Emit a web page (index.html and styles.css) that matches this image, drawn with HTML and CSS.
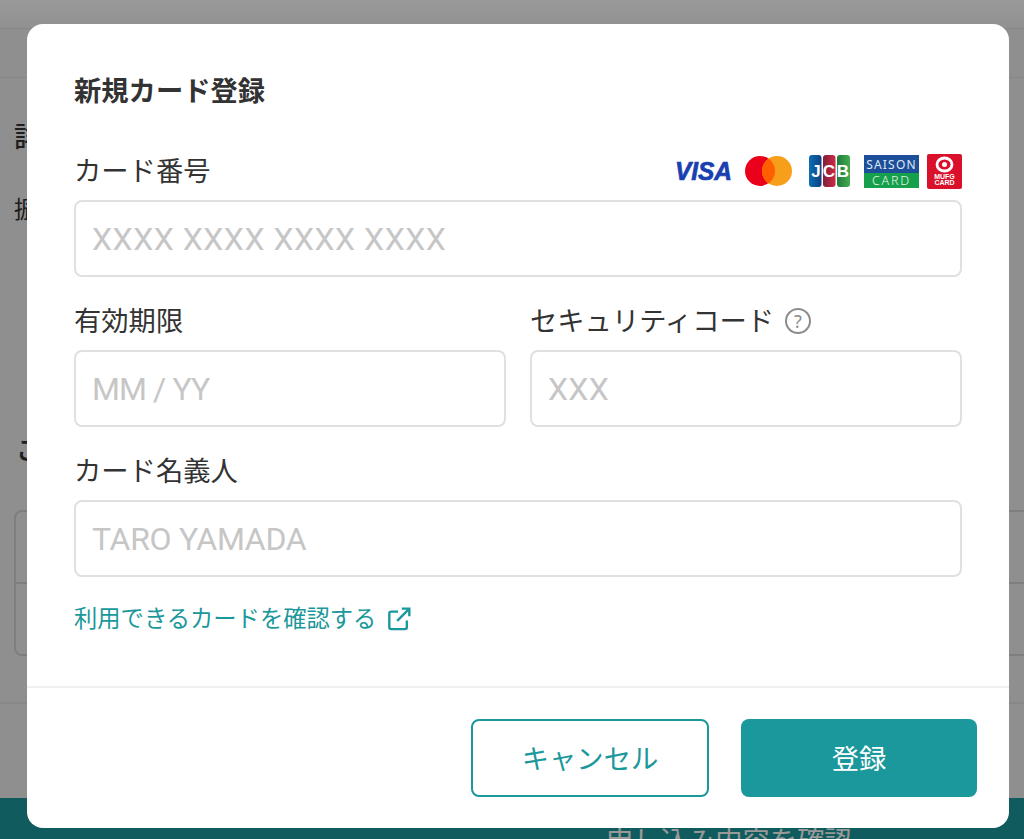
FILE: index.html
```html
<!DOCTYPE html>
<html lang="ja">
<head>
<meta charset="utf-8">
<title>新規カード登録</title>
<link rel="stylesheet" href="styles.css">
</head>
<body>
<div class="page">
  <div class="page-top"></div>
  <div class="page-nav"></div>
  <div class="page-body">
    <h2 class="bg-heading">詳細</h2>
    <p class="bg-text">振込</p>
    <h2 class="bg-heading second">ご利用</h2>
    <div class="bg-table"><div class="bg-row"></div><div class="bg-row"></div></div>
  </div>
  <div class="page-gap"></div>
  <div class="page-cta"><span>申し込み内容を確認</span></div>
</div>
<div class="backdrop"></div>
<form class="modal">
  <div class="modal-main">
    <h1 class="modal-title">新規カード登録</h1>
    <div class="field">
      <div class="label-row">
        <label class="label" for="num">カード番号</label>
        <div class="brands">
          <svg class="brand" width="60" height="26" viewBox="0 0 60 26"><text class="visa" x="1" y="22" textLength="57" lengthAdjust="spacingAndGlyphs">VISA</text></svg>
          <svg class="brand" width="47" height="30" viewBox="0 0 47 30"><circle cx="15" cy="15" r="15" fill="#eb001b"/><circle cx="32" cy="15" r="15" fill="#f79e1b"/><path d="M23.500 2.600a15 15 0 0 1 0 24.800a15 15 0 0 1 0-24.800z" fill="#ff5f00"/></svg>
          <svg class="brand" width="41" height="32" viewBox="0 0 41 32">
            <defs>
              <linearGradient id="jb"><stop offset="0" stop-color="#0d6fb0"/><stop offset="1" stop-color="#0e3f85"/></linearGradient>
              <linearGradient id="jr"><stop offset="0" stop-color="#7d1f3a"/><stop offset="1" stop-color="#cf2a45"/></linearGradient>
              <linearGradient id="jg"><stop offset="0" stop-color="#1d7a3c"/><stop offset="1" stop-color="#45ad4e"/></linearGradient>
            </defs>
            <rect width="12.500" height="32" rx="3" fill="url(#jb)"/>
            <rect x="14" width="12.500" height="32" rx="3" fill="url(#jr)"/>
            <rect x="28" width="13" height="32" rx="3" fill="url(#jg)"/>
            <text class="jcb" x="7 20 34" y="22">JCB</text>
          </svg>
          <svg class="brand" width="55" height="33" viewBox="0 0 55 33"><rect width="55" height="18" fill="#1d4e9a"/><rect y="18" width="55" height="15" fill="#17a04c"/><text class="saison" x="27.500" y="13.500">SAISON</text><text class="saison-card" x="27.500" y="30">CARD</text></svg>
          <svg class="brand" width="35" height="35" viewBox="0 0 35 35"><rect width="35" height="35" rx="2" fill="#d9112a"/><ellipse cx="17.500" cy="10.500" rx="7.500" ry="6.500" fill="none" stroke="#fff" stroke-width="2.800"/><circle cx="17.500" cy="10.500" r="2.500" fill="#fff"/><text class="mufg" x="17.500" y="24.500">MUFG</text><text class="mufg" x="17.500" y="31">CARD</text></svg>
        </div>
      </div>
      <input class="input input-num" id="num" placeholder="XXXX XXXX XXXX XXXX">
    </div>
    <div class="field-grid">
      <div class="field">
        <div class="label-row"><label class="label" for="exp">有効期限</label></div>
        <input class="input input-exp" id="exp" placeholder="MM / YY">
      </div>
      <div class="field">
        <div class="label-row start">
          <label class="label" for="cvc">セキュリティコード</label>
          <svg class="help" width="28" height="28" viewBox="0 0 28 28"><circle cx="14" cy="14" r="12" fill="none" stroke="#8c8c8c" stroke-width="2"/><text class="help-mark" x="14" y="20.500">?</text></svg>
        </div>
        <input class="input input-cvc" id="cvc" placeholder="XXX">
      </div>
    </div>
    <div class="field">
      <div class="label-row"><label class="label" for="name">カード名義人</label></div>
      <input class="input input-name" id="name" placeholder="TARO YAMADA">
    </div>
    <a class="card-link" href="#"><span class="card-link-text">利用できるカードを確認する</span>
      <svg width="24" height="24" viewBox="0 0 26 26" fill="none" stroke="#1b989b" stroke-width="2.600"><path d="M12 5H4.500A2 2 0 0 0 2.500 7v15a2 2 0 0 0 2 2h15a2 2 0 0 0 2-2v-7.500"/><path d="M11 15L24 2"/><path d="M16 1.800h8.200V10"/></svg>
    </a>
  </div>
  <div class="modal-footer">
    <button class="btn btn-outline" type="button">キャンセル</button>
    <button class="btn btn-solid" type="button">登録</button>
  </div>
</form>
</body>
</html>
```
FILE: styles.css
```css
* { box-sizing: border-box; }
html, body { margin: 0; height: 839px; overflow: hidden; }
body {
  font-family: "Noto Sans CJK JP", "Noto Sans", sans-serif;
  color: #333;
  background: #eee;
}
.page { height: 839px; display: flex; flex-direction: column; overflow: hidden; }
.page > div { flex: none; }
.page-top { height: 29px; background: linear-gradient(#fff, #f2f2f2); border-bottom: 1px solid #e2e2e2; }
.page-nav { height: 49px; border-bottom: 1px solid #e2e2e2; }
.page-body { height: 626px; padding: 37px 14px 0; border-bottom: 2px solid #e2e2e2; overflow: hidden; }
.bg-heading { margin: 0; font-size: 27.300px; font-weight: 500; line-height: 40px; }
.bg-heading.second { margin-top: 204px; padding-left: 2px; }
.bg-text { margin: 37px 0 0; font-size: 23.300px; line-height: 32px; }
.bg-table { margin-top: 42px; width: 1100px; height: 146px; border: 2px solid #d2d2d2; border-radius: 8px; }
.bg-row { height: 70px; }
.bg-row + .bg-row { height: 72px; border-top: 2px solid #d2d2d2; }
.page-gap { height: 94px; }
.page-cta {
  height: 64px;
  background: #1b989b;
  color: #fff;
  font-size: 27.300px;
  line-height: 46px;
  padding-top: 18px;
  padding-left: 606px;
  white-space: nowrap;
}
.backdrop { position: fixed; inset: 0; background: rgba(0, 0, 0, 0.4); }
.modal {
  position: fixed;
  left: 27px;
  top: 24px;
  width: 982px;
  height: 804px;
  background: #fff;
  border-radius: 16px;
  display: flex;
  flex-direction: column;
}
.modal-main { flex: 1; padding: 45px 47px 0; display: flex; flex-direction: column; }
.modal-title { margin: 0 0 41px; font-size: 27.300px; line-height: 40px; font-weight: 700; color: #333; }
.field { display: flex; flex-direction: column; gap: 10px; min-width: 0; }
.label-row { display: flex; justify-content: space-between; align-items: center; height: 40px; }
.label-row.start { justify-content: flex-start; gap: 10px; }
.label { font-size: 27.300px; line-height: 38px; padding-bottom: 2px; color: #333; white-space: nowrap; }
.input {
  width: 100%;
  height: 77px;
  padding: 0 16px;
  border: 2px solid #e0e0e0;
  border-radius: 8px;
  background: #fff;
  font-family: "Roboto", "Noto Sans CJK JP", sans-serif;
  font-size: 32px;
  color: #333;
  outline: none;
}
.input-num { letter-spacing: 0.500px; }
.input-exp { letter-spacing: -0.900px; }
.input-cvc { letter-spacing: 0.300px; }
.input-name { letter-spacing: -0.300px; }
.input::placeholder { color: #c6c6c6; opacity: 1; }
.field-grid { display: grid; grid-template-columns: 1fr 1fr; gap: 24px; margin: 23px 0; }
.brands { display: flex; align-items: center; margin-top: 2px; }
.brand { display: block; flex: none; }
.brands .brand:nth-child(1) { margin-right: 11px; }
.brands .brand:nth-child(2) { margin-right: 17px; }
.brands .brand:nth-child(3) { margin-right: 14px; }
.brands .brand:nth-child(4) { margin-right: 8px; }
.visa { font-family: "Liberation Sans", sans-serif; font-size: 25px; font-weight: 700; font-style: italic; fill: #1a3fb0; stroke: #1a3fb0; stroke-width: 0.700px; }
.jcb { font-family: "Liberation Sans", sans-serif; font-size: 17px; font-weight: 700; fill: #fff; text-anchor: middle; }
.saison { font-family: "Noto Sans", sans-serif; font-size: 12px; fill: #dfe8f5; text-anchor: middle; letter-spacing: 1.200px; }
.saison-card { font-family: "Noto Sans", sans-serif; font-size: 12.500px; font-weight: 300; fill: #e6f5ea; text-anchor: middle; letter-spacing: 1.800px; }
.mufg { font-family: "Liberation Sans", sans-serif; font-size: 7px; font-weight: 700; fill: #fff; text-anchor: middle; }
.help { flex: none; margin-top: 1px; }
.help-mark { font-family: "Noto Sans", sans-serif; font-size: 18px; fill: #8c8c8c; text-anchor: middle; }
.card-link {
  margin-top: 24px;
  display: flex;
  align-items: center;
  gap: 11px;
  height: 36px;
  font-size: 23.300px;
  color: #1b989b;
  text-decoration: none;
  white-space: nowrap;
}
.card-link-text { padding-bottom: 4px; }
.modal-footer {
  height: 142px;
  padding: 31px 32px 0 0;
  border-top: 2px solid #f0f0f0;
  display: flex;
  justify-content: flex-end;
  gap: 32px;
}
.btn {
  height: 78px;
  padding: 0 0 3px;
  border-radius: 8px;
  font-family: inherit;
  font-size: 27.300px;
  cursor: pointer;
}
.btn-outline { width: 238px; background: #fff; color: #1b989b; border: 2px solid #1b989b; }
.btn-solid { width: 236px; background: #1b989b; color: #fff; border: 0; }
```
